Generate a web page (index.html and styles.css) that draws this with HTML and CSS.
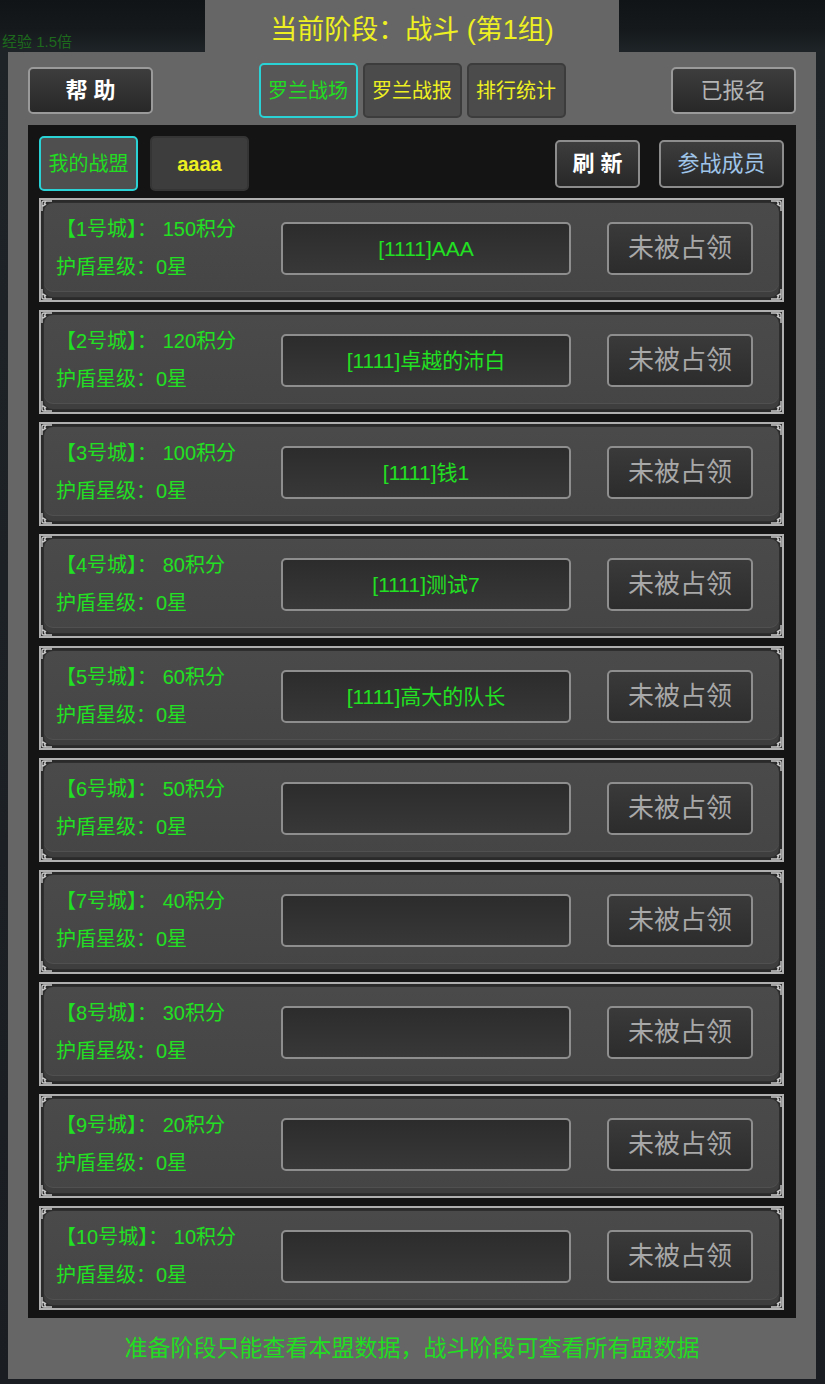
FILE: index.html
```html
<!DOCTYPE html>
<html lang="zh-CN">
<head>
<meta charset="UTF-8">
<meta name="viewport" content="width=device-width, initial-scale=1.0">
<title>罗兰战场</title>
<link rel="stylesheet" href="styles.css">
</head>
<body>
  <div class="backdrop">
    <div class="backdrop-exp">经验 1.5倍</div>
  </div>

  <div class="dialog">
    <div class="title-tab">当前阶段：战斗 (第1组)</div>

    <div class="panel">
      <div class="toolbar">
        <div class="toolbar-left">
          <button class="btn btn-help">帮 助</button>
        </div>
        <div class="tabs">
          <button class="tab active">罗兰战场</button>
          <button class="tab">罗兰战报</button>
          <button class="tab">排行统计</button>
        </div>
        <div class="toolbar-right">
          <button class="btn btn-signed">已报名</button>
        </div>
      </div>

      <div class="board">
        <div class="board-head">
          <div class="subtabs">
            <button class="subtab active">我的战盟</button>
            <button class="subtab alliance">aaaa</button>
          </div>
          <div class="board-actions">
            <button class="btn btn-refresh">刷 新</button>
            <button class="btn btn-members">参战成员</button>
          </div>
        </div>

        <div class="city-list" id="cityList"></div>
      </div>

      <div class="footer-note">准备阶段只能查看本盟数据，战斗阶段可查看所有盟数据</div>
    </div>
  </div>

<script>
  const cities = [
    { name: '1号城', score: 150, owner: '[1111]AAA' },
    { name: '2号城', score: 120, owner: '[1111]卓越的沛白' },
    { name: '3号城', score: 100, owner: '[1111]钱1' },
    { name: '4号城', score: 80, owner: '[1111]测试7' },
    { name: '5号城', score: 60, owner: '[1111]高大的队长' },
    { name: '6号城', score: 50, owner: '' },
    { name: '7号城', score: 40, owner: '' },
    { name: '8号城', score: 30, owner: '' },
    { name: '9号城', score: 20, owner: '' },
    { name: '10号城', score: 10, owner: '' }
  ];

  const corner = '<svg viewBox="0 0 12 12" width="12" height="12"><path d="M1 11 V3 Q1 1 3 1 H11 M1 6 Q4 6 4 3 Q4 1 6 1 M3 3 L5 5" fill="none" stroke="#c8c8c8" stroke-width="1.4"/></svg>';

  const list = document.getElementById('cityList');

  cities.forEach(city => {
    const row = document.createElement('div');
    row.className = 'city-row';
    row.innerHTML = `
      <span class="corner tl">${corner}</span>
      <span class="corner tr">${corner}</span>
      <span class="corner bl">${corner}</span>
      <span class="corner br">${corner}</span>
      <div class="city-inner">
        <div class="city-info">
          <div>【${city.name}】： ${city.score}积分</div>
          <div>护盾星级：0星</div>
        </div>
        <div class="city-owner">${city.owner}</div>
        <button class="btn-occupy">未被占领</button>
      </div>`;
    list.appendChild(row);
  });
</script>
</body>
</html>
```

FILE: styles.css
```css
* {
  box-sizing: border-box;
  margin: 0;
  padding: 0;
}

body {
  font-family: "Liberation Sans", "Noto Sans CJK SC", sans-serif;
  background-color: #181c20;
  width: 825px;
  height: 1384px;
  position: relative;
  overflow: hidden;
}

button {
  font-family: inherit;
  cursor: pointer;
}

/* game screen behind the dialog */
.backdrop {
  position: absolute;
  inset: 0;
  background: linear-gradient(180deg, #111417 0, #15191c 30px, #1e2327 50px, #1a1e22 100%);
}

.backdrop-exp {
  margin-top: 34px;
  padding-left: 2px;
  font-size: 15px;
  color: #1d6a1d;
  line-height: 16px;
}

.dialog {
  position: relative;
  width: 808px;
  margin-left: 8px;
}

.title-tab {
  width: 414px;
  height: 52px;
  margin: 0 auto;
  background-color: #666;
  color: #eef022;
  font-size: 27px;
  line-height: 60px;
  text-align: center;
}

.panel {
  background-color: #666;
  height: 1327px;
  padding: 11px 20px 0;
}

.toolbar {
  display: grid;
  grid-template-columns: 1fr auto 1fr;
  align-items: center;
  height: 55px;
}

.toolbar-right {
  display: flex;
  justify-content: flex-end;
}

.btn {
  border: 2px solid #9a9a9a;
  border-radius: 5px;
  background: linear-gradient(180deg, #3d3d3d, #282828);
  font-size: 22px;
  line-height: 1;
}

.btn-help {
  width: 125px;
  height: 47px;
  color: #fff;
  font-weight: bold;
}

.btn-signed {
  width: 125px;
  height: 47px;
  color: #b4b4b4;
}

.tabs {
  display: flex;
  gap: 5px;
}

.tab {
  width: 99px;
  height: 55px;
  border: 2px solid #3c3c3c;
  border-radius: 5px;
  background-color: #4b4b4b;
  color: #eef022;
  font-size: 20px;
  line-height: 1;
}

.tab.active {
  border-color: #2ad2d6;
  background-color: #575757;
  color: #22dd22;
}

.board {
  margin-top: 7px;
  background-color: #141414;
  padding: 11px 12px 8px 11px;
}

.board-head {
  display: flex;
  justify-content: space-between;
  align-items: center;
  height: 55px;
  margin-bottom: 7px;
}

.subtabs {
  display: flex;
  gap: 12px;
}

.subtab {
  width: 99px;
  height: 55px;
  border: 2px solid #353535;
  border-radius: 5px;
  background-color: #3d3d3d;
  color: #eef022;
  font-size: 20px;
  line-height: 1;
}

.subtab.active {
  border-color: #2ad2d6;
  background-color: #4f4f4f;
  color: #22dd22;
}

.subtab.alliance {
  font-weight: bold;
}

.board-actions {
  display: flex;
  gap: 19px;
}

.btn-refresh {
  width: 85px;
  height: 48px;
  color: #fff;
  font-weight: bold;
  border-color: #8c8c8c;
}

.btn-members {
  width: 125px;
  height: 48px;
  color: #9fc4e8;
  border-color: #8c8c8c;
}

.city-list {
  display: flex;
  flex-direction: column;
  gap: 8px;
}

.city-row {
  position: relative;
  height: 104px;
  border: 2px solid #b0b0b0;
  background-color: #2a2a2a;
  padding: 2px;
}

.corner {
  position: absolute;
  width: 12px;
  height: 12px;
  line-height: 0;
  z-index: 1;
}

.corner.tl { top: 0; left: 0; }
.corner.tr { top: 0; right: 0; transform: scaleX(-1); }
.corner.bl { bottom: 0; left: 0; transform: scaleY(-1); }
.corner.br { bottom: 0; right: 0; transform: scale(-1, -1); }

.city-inner {
  height: 100%;
  display: flex;
  align-items: center;
  border: 1px solid #2e2e2e;
  border-radius: 10px;
  background: linear-gradient(180deg, #4a4a4a, #454545);
  box-shadow: inset 0 -5px 0 #3e3e3e, inset 0 -6px 0 #505050;
  padding: 0 0 4px 12px;
}

.city-info {
  width: 225px;
  color: #22e022;
  font-size: 20px;
  line-height: 38px;
  white-space: nowrap;
}

.city-owner {
  width: 290px;
  height: 53px;
  border: 2px solid #8e8e8e;
  border-radius: 5px;
  background: linear-gradient(180deg, #2c2c2c, #383838);
  color: #22e022;
  font-size: 21px;
  line-height: 49px;
  text-align: center;
}

.btn-occupy {
  width: 146px;
  height: 53px;
  margin-left: 36px;
  border: 2px solid #8e8e8e;
  border-radius: 5px;
  background: linear-gradient(180deg, #3a3a3a, #2c2c2c);
  color: #a8a8a8;
  font-size: 26px;
  line-height: 1;
}

.footer-note {
  height: 61px;
  line-height: 61px;
  text-align: center;
  color: #22dd22;
  font-size: 23px;
}
```
